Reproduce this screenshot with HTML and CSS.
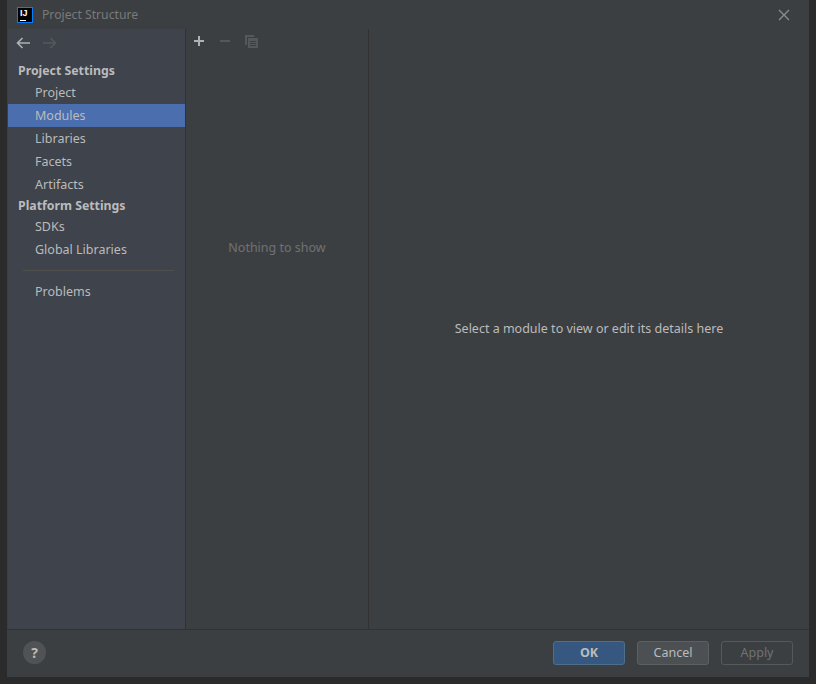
FILE: index.html
```html
<!DOCTYPE html>
<html lang="en">
  <head>
    <meta charset="UTF-8" />
    <meta name="viewport" content="width=device-width, initial-scale=1.0" />
    <title>Project Structure</title>
    <link rel="stylesheet" href="styles.css">
  </head>
  <body>
    <div class="window">
      <div class="title-bar">
        <div class="app-logo">
          <span class="app-logo-text">IJ</span>
          <span class="app-logo-bar"></span>
        </div>
        <span class="title-text">Project Structure</span>
        <svg class="close-icon" width="12" height="12" viewBox="0 0 12 12">
          <path d="M1 1 L11 11 M11 1 L1 11" stroke="#8c8e90" stroke-width="1.3" fill="none" />
        </svg>
      </div>

      <div class="main">
        <div class="sidebar">
          <div class="nav-arrows">
            <svg width="14" height="12" viewBox="0 0 14 12">
              <path d="M14 6 H2 M6.5 1 L1.5 6 L6.5 11" stroke="#afb1b3" stroke-width="1.6" fill="none" />
            </svg>
            <svg width="14" height="12" viewBox="0 0 14 12">
              <path d="M0 6 H12 M7.5 1 L12.5 6 L7.5 11" stroke="#55585a" stroke-width="1.6" fill="none" />
            </svg>
          </div>
          <div class="side-heading">Project Settings</div>
          <div class="side-item">Project</div>
          <div class="side-item selected">Modules</div>
          <div class="side-item">Libraries</div>
          <div class="side-item">Facets</div>
          <div class="side-item">Artifacts</div>
          <div class="side-heading second">Platform Settings</div>
          <div class="side-item">SDKs</div>
          <div class="side-item">Global Libraries</div>
          <div class="side-separator"></div>
          <div class="side-item">Problems</div>
        </div>

        <div class="module-list">
          <div class="toolbar">
            <svg width="12" height="12" viewBox="0 0 12 12">
              <path d="M6 1 V11 M1 6 H11" stroke="#afb1b3" stroke-width="2" fill="none" />
            </svg>
            <svg width="12" height="12" viewBox="0 0 12 12">
              <path d="M1 6 H11" stroke="#55585a" stroke-width="2" fill="none" />
            </svg>
            <svg width="13" height="13" viewBox="0 0 13 13">
              <path d="M1 10 V1 H9" stroke="#55585a" stroke-width="2" fill="none" />
              <path d="M3 3 H13 V13 H3 Z" fill="#55585a" />
              <path d="M5 6.5 H11 M5 8.5 H11 M5 10.5 H11" stroke="#3c3f41" stroke-width="1" fill="none" />
            </svg>
          </div>
          <div class="empty-text">Nothing to show</div>
        </div>

        <div class="details">
          <span class="details-text">Select a module to view or edit its details here</span>
        </div>
      </div>

      <div class="footer">
        <div class="help-button">?</div>
        <div class="footer-buttons">
          <div class="btn btn-ok">OK</div>
          <div class="btn btn-cancel">Cancel</div>
          <div class="btn btn-apply">Apply</div>
        </div>
      </div>
    </div>
  </body>
</html>
```

FILE: styles.css
```css
body {
  margin: 0;
  height: 684px;
  overflow: hidden;
  background-color: #2b2b2b;
  font-family: "Noto Sans", "Open Sans", sans-serif;
  font-size: 12.5px;
  color: #bbbbbb;
}

.window {
  width: 802px;
  height: 677px;
  margin-left: 7px;
  background-color: #3c3f41;
  display: flex;
  flex-direction: column;
}

.title-bar {
  height: 29px;
  display: flex;
  align-items: center;
  padding: 0 19px 0 10px;
}
.app-logo {
  width: 14px;
  height: 14px;
  background-color: #000;
  border: 1px solid #087cfa;
  position: relative;
  margin-right: 9px;
}
.app-logo-text {
  position: absolute;
  top: 1px;
  left: 2px;
  font-family: "Liberation Sans", sans-serif;
  font-size: 9px;
  line-height: 8px;
  font-weight: bold;
  color: #fff;
}
.app-logo-bar {
  position: absolute;
  left: 2px;
  bottom: 1px;
  width: 6px;
  height: 1px;
  background-color: #fff;
}
.title-text {
  color: #787a7c;
  flex: 1;
  font-size: 12.2px;
}

.main {
  height: 600px;
  display: flex;
  border-bottom: 1px solid #323232;
}

.sidebar {
  width: 177px;
  background-color: #3e434c;
  border-left: 1px solid #3c3f41;
  border-right: 1px solid #323232;
}
.nav-arrows {
  height: 32px;
  display: flex;
  align-items: center;
  gap: 13px;
  padding: 0 0 4px 8px;
  box-sizing: border-box;
}
.side-heading {
  height: 20px;
  line-height: 20px;
  padding-left: 10px;
  font-weight: bold;
  font-size: 12.3px;
}
.second {
  height: 19px;
  line-height: 19px;
}
.side-item {
  height: 23px;
  line-height: 23px;
  padding-left: 27px;
}
.selected {
  background-color: #4b6eaf;
}
.side-separator {
  height: 1px;
  margin: 9px 11px 9px 15px;
  background-color: #4f4f4e;
}

.module-list {
  width: 182px;
  border-right: 1px solid #323232;
  display: flex;
  flex-direction: column;
}
.toolbar {
  height: 24px;
  display: flex;
  align-items: center;
  gap: 14px;
  padding-left: 7px;
}
.empty-text {
  margin-top: 186px;
  text-align: center;
  color: #6f7274;
}

.details {
  flex: 1;
  padding-top: 291px;
  text-align: center;
  box-sizing: border-box;
}

.footer {
  flex: 1;
  display: flex;
  align-items: center;
  justify-content: space-between;
  padding: 0 16px 2px;
}
.help-button {
  width: 23px;
  height: 23px;
  border-radius: 50%;
  background-color: #505355;
  color: #bbbbbb;
  font-weight: bold;
  font-size: 14px;
  line-height: 23px;
  text-align: center;
}
.footer-buttons {
  display: flex;
  gap: 12px;
}
.btn {
  width: 70px;
  height: 22px;
  line-height: 22px;
  border-radius: 3px;
  border: 1px solid #5e6060;
  text-align: center;
}
.btn-ok {
  background-color: #365880;
  border-color: #4c708c;
  font-weight: bold;
}
.btn-cancel {
  background-color: #4c5052;
}
.btn-apply {
  background-color: #3c3f41;
  border-color: #56595b;
  color: #6f7274;
}
```
